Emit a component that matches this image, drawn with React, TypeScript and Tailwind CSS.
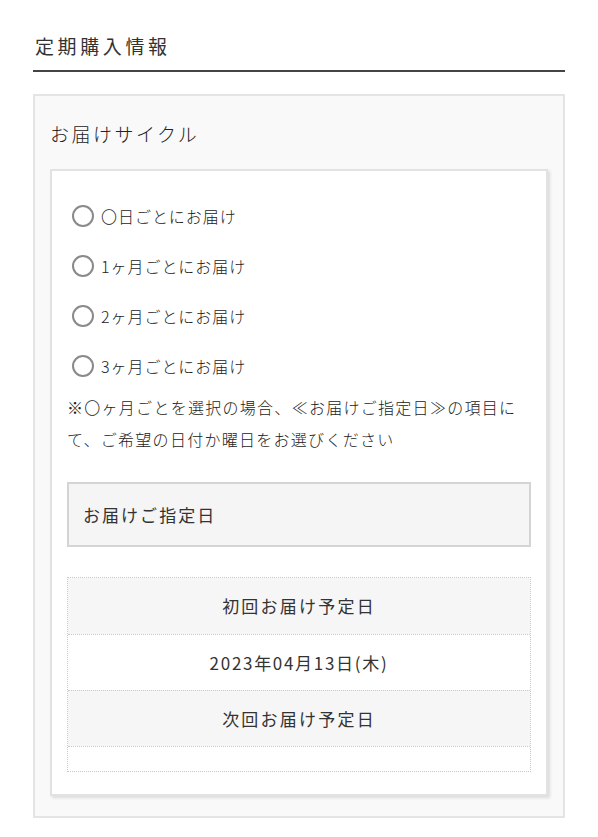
import React from "react";

const font = { fontFamily: '"Noto Sans CJK JP", "Noto Sans", sans-serif' };

function Radio({ label }: { label: string }) {
  return (
    <label className="flex h-[50px] items-center">
      <span className="ml-[5px] block h-[22px] w-[22px] rounded-full border-2 border-[#8a8a8a] bg-white" />
      <span className="ml-[7px] text-[16px] font-light leading-[24px] tracking-[0.06em] text-[#222]">{label}</span>
    </label>
  );
}

export default function App() {
  return (
    <div className="min-h-[837px] bg-white px-[33px] pt-[32px] text-[#333]" style={font}>
      <h2 className="border-b-2 border-[#444] pb-[10px] pl-[2px] text-[19px] leading-[28px] tracking-[0.19em] text-[#333]">
        定期購入情報
      </h2>
      <div className="mt-[22px] border-2 border-[#e4e4e4] bg-[#f9f9f9] px-[15px] pb-[20px]">
        <div className="pt-[24px] text-[19px] font-light leading-[28px] tracking-[0.13em] text-[#222]">お届けサイクル</div>
        <div className="mt-[21px] border-2 border-[#e2e2e2] bg-white px-[15px] pb-[22px] pt-[20px] shadow-[2px_2px_3px_rgba(0,0,0,0.12)]">
          <Radio label="〇日ごとにお届け" />
          <Radio label="1ヶ月ごとにお届け" />
          <Radio label="2ヶ月ごとにお届け" />
          <Radio label="3ヶ月ごとにお届け" />
          <p className="text-[16px] font-light leading-[32px] tracking-[0.08em] text-[#222]">
            ※〇ヶ月ごとを選択の場合、≪お届けご指定日≫の項目にて、ご希望の日付か曜日をお選びください
          </p>
          <div className="mt-[27px] flex h-[65px] items-center border-2 border-[#d4d4d4] bg-[#f5f5f5] px-[14px] text-[17px] tracking-[0.12em]">
            お届けご指定日
          </div>
          <div className="mt-[30px] border border-dotted border-[#c8c8c8] text-[17px] tracking-[0.13em]">
            <div className="flex h-[56px] items-center justify-center bg-[#f6f6f6]">初回お届け予定日</div>
            <div className="flex h-[56px] items-center justify-center border-t border-dotted border-[#c8c8c8] bg-white tracking-[0.1em]">
              2023年04月13日(木)
            </div>
            <div className="flex h-[56px] items-center justify-center border-t border-dotted border-[#c8c8c8] bg-[#f6f6f6]">
              次回お届け予定日
            </div>
            <div className="h-[25px] border-t border-dotted border-[#c8c8c8] bg-white" />
          </div>
        </div>
      </div>
    </div>
  );
}
